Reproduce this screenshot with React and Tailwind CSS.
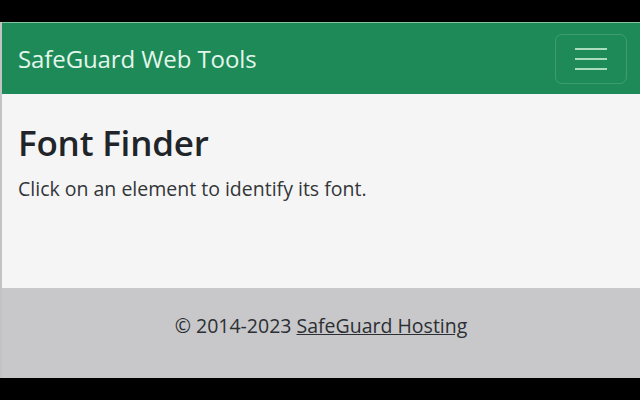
import React from 'react';

const font = { fontFamily: '"Open Sans", "Noto Sans", sans-serif' };

export default function App() {
  return (
    <div className="h-[400px] w-[640px] flex flex-col bg-black overflow-hidden" style={font}>
      <div className="h-[22px] shrink-0" />

      <div className="flex-1 flex flex-col border-l-2 border-[#c2c4c3]">
        {/* Navbar */}
        <header className="h-[72px] shrink-0 flex items-center justify-between pl-[16px] pr-[13px] bg-[#1d8a58] border-t border-[#7fc59f]">
          <span className="text-[24px] leading-[36px] text-[#e3f6ec] tracking-[-0.1px]">SafeGuard Web Tools</span>
          <button className="w-[72px] h-[50px] flex flex-col items-center justify-center gap-[8px] rounded-[7px] border border-white/15">
            <span className="block w-[32px] h-[2px] bg-[#a9dcbf]" />
            <span className="block w-[32px] h-[2px] bg-[#a9dcbf]" />
            <span className="block w-[32px] h-[2px] bg-[#a9dcbf]" />
          </button>
        </header>

        {/* Content */}
        <main className="flex-1 bg-[#f5f5f5] px-[16px] pt-[28px]">
          <h1 className="text-[35px] leading-[42px] font-semibold text-[#212529] tracking-[-0.2px]">Font Finder</h1>
          <p className="mt-[11px] text-[19.5px] leading-[28px] text-[#333639]">Click on an element to identify its font.</p>
        </main>

        {/* Footer */}
        <footer className="h-[90px] shrink-0 flex items-center justify-center bg-[#c8c8ca]">
          <p className="text-[19.5px] leading-[29px] text-[#2c2f33] pb-[16px]">
            © 2014-2023 <a className="underline">SafeGuard Hosting</a>
          </p>
        </footer>
      </div>

      <div className="h-[22px] shrink-0" />
    </div>
  );
}
